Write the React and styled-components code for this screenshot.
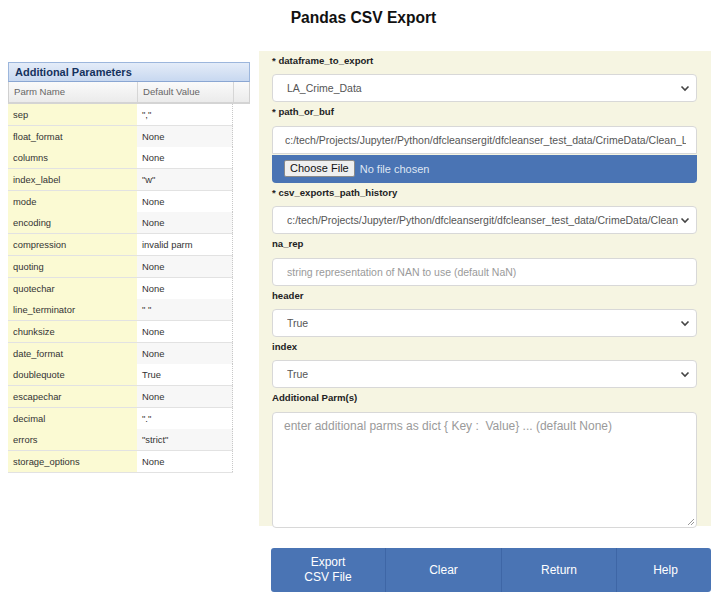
import React from "react";
import styled, { createGlobalStyle } from "styled-components";

const GlobalStyle = createGlobalStyle`
  body {
    margin: 0;
    background: #ffffff;
    font-family: "Liberation Sans", Arial, sans-serif;
  }
`;

const Page = styled.div`
  width: 720px;
  height: 597px;
  box-sizing: border-box;
  padding: 8px 0 0 8px;
`;

const Title = styled.h1`
  margin: 0 0 0 7px;
  font-size: 15.6px;
  font-weight: bold;
  color: #111;
  text-align: center;
  padding-right: 8px;
  height: 20px;
  line-height: 20px;
`;

const Body = styled.div`
  display: flex;
  align-items: flex-start;
  margin-top: 23px;
`;

const LeftCol = styled.div`
  width: 242px;
  margin-top: 11px;
`;

const TableTitle = styled.div`
  height: 20px;
  line-height: 19px;
  box-sizing: border-box;
  padding-left: 6px;
  font-size: 11px;
  font-weight: bold;
  color: #15325e;
  background: linear-gradient(#e4ecf8, #c8d8f0);
  border: 1px solid #9cb6dc;
  border-bottom: 1px solid #8aa6d2;
`;

const HeadRow = styled.div`
  display: grid;
  grid-template-columns: 129px 96px 1fr;
  height: 22px;
  box-sizing: border-box;
  background: linear-gradient(#fafafa, #ebebeb);
  border-bottom: 2px solid #d4d4d4;
  border-left: 1px solid #d0d0d0;
  border-right: 1px solid #d0d0d0;
`;

const HeadCell = styled.div`
  font-size: 9.6px;
  color: #666;
  line-height: 20px;
  padding-left: 5px;
  border-right: 1px solid #d6d6d6;
  &:last-child { border-right: none; }
`;

const Rows = styled.div`
  width: 225px;
`;

const Row = styled.div`
  display: grid;
  grid-template-columns: 129px 96px;
  height: 21.7px;
  box-sizing: border-box;
  border-bottom: 1px solid #e2e2e2;
`;

const NameCell = styled.div`
  background: #fbfad3;
  font-size: 9.4px;
  color: #333;
  line-height: 21px;
  padding-left: 5px;
`;

const ValueCell = styled.div`
  background: ${({ $alt }) => ($alt ? "#f7f7f7" : "#ffffff")};
  font-size: 9.4px;
  color: #333;
  line-height: 21px;
  padding-left: 5px;
  border-right: 1px dotted #c8c8c8;
`;

const RightCol = styled.div`
  margin-left: 9px;
  width: 452px;
  display: flex;
  flex-direction: column;
`;

const FormPanel = styled.div`
  background: #f6f5e2;
  padding: 0 14px 0 13px;
  height: 475px;
  box-sizing: border-box;
`;

const Label = styled.div`
  font-size: 9.6px;
  font-weight: bold;
  color: #222;
  height: 23.4px;
  line-height: 12px;
  padding-top: 4px;
  box-sizing: border-box;
`;

const Field = styled.div`
  position: relative;
  height: 28px;
  box-sizing: border-box;
  background: #fff;
  border: 1px solid #d8d8d8;
  border-radius: 4px;
  font-size: 10.5px;
  line-height: 26px;
  color: ${({ $placeholder }) => ($placeholder ? "#9a9a9a" : "#555")};
  padding-left: ${({ $pad }) => $pad || 14}px;
  padding-right: ${({ $pr }) => $pr || 12}px;
  border-bottom-left-radius: ${({ $joined }) => ($joined ? 0 : 4)}px;
  border-bottom-right-radius: ${({ $joined }) => ($joined ? 0 : 4)}px;
`;

const FieldText = styled.div`
  white-space: nowrap;
  overflow: hidden;
`;

const Chevron = styled.svg`
  position: absolute;
  right: 6px;
  top: 10px;
`;

const FileBar = styled.div`
  display: flex;
  align-items: center;
  gap: 5px;
  height: 28px;
  margin-top: 1px;
  box-sizing: border-box;
  background: #4a74b4;
  border-radius: 0 0 4px 4px;
  padding-left: 12px;
`;

const FileButton = styled.div`
  height: 17px;
  line-height: 15px;
  box-sizing: border-box;
  padding: 0 5px;
  background: #efefef;
  border: 1px solid #8a8a8a;
  border-radius: 2px;
  font-size: 11px;
  color: #111;
`;

const FileText = styled.span`
  font-size: 11px;
  color: #dfe6f3;
`;

const TextArea = styled.div`
  position: relative;
  height: 116px;
  box-sizing: border-box;
  background: #fff;
  border: 1px solid #d8d8d8;
  border-radius: 4px;
  font-size: 12px;
  color: #9a9a9a;
  padding: 6px 0 0 11px;
`;

const Grip = styled.svg`
  position: absolute;
  right: 1px;
  bottom: 1px;
`;

const ButtonBar = styled.div`
  display: flex;
  margin: 22px 0 0 12px;
  height: 44px;
  border-radius: 3px;
  overflow: hidden;
  width: 440px;
`;

const ActionButton = styled.div`
  flex: ${({ $w }) => `0 0 ${$w}px`};
  display: flex;
  align-items: center;
  justify-content: center;
  text-align: center;
  background: #4a74b4;
  color: #fff;
  font-size: 12px;
  line-height: 15px;
  border-left: 1px solid #3e66a6;
  &:first-child { border-left: none; }
`;

const params = [
  ["sep", "\",\""],
  ["float_format", "None"],
  ["columns", "None"],
  ["index_label", "\"w\""],
  ["mode", "None"],
  ["encoding", "None"],
  ["compression", "invalid parm"],
  ["quoting", "None"],
  ["quotechar", "None"],
  ["line_terminator", "\" \""],
  ["chunksize", "None"],
  ["date_format", "None"],
  ["doublequote", "True"],
  ["escapechar", "None"],
  ["decimal", "\".\""],
  ["errors", "\"strict\""],
  ["storage_options", "None"],
];

const Down = () => (
  <Chevron width="10" height="7" viewBox="0 0 10 7">
    <path d="M1.5 1.5 L5 5 L8.5 1.5" fill="none" stroke="#444" strokeWidth="1.6" />
  </Chevron>
);

const Select = ({ children }) => (
  <Field $pr={18}>
    <FieldText>{children}</FieldText>
    <Down />
  </Field>
);

const App = () => {
  const path =
    "c:/tech/Projects/Jupyter/Python/dfcleansergit/dfcleanser_test_data/CrimeData/Clean_LA_Crime_Data.csv";
  return (
    <Page>
      <GlobalStyle />
      <Title>Pandas CSV Export</Title>
      <Body>
        <LeftCol>
          <TableTitle>Additional Parameters</TableTitle>
          <HeadRow>
            <HeadCell>Parm Name</HeadCell>
            <HeadCell>Default Value</HeadCell>
            <HeadCell />
          </HeadRow>
          <Rows>
            {params.map(([name, value], i) => (
              <Row key={name}>
                <NameCell>{name}</NameCell>
                <ValueCell $alt={i % 2 === 1}>{value}</ValueCell>
              </Row>
            ))}
          </Rows>
        </LeftCol>
        <RightCol>
          <FormPanel>
            <Label>* dataframe_to_export</Label>
            <Select>LA_Crime_Data</Select>
            <Label>* path_or_buf</Label>
            <Field $joined $pad={12} $pr={10}>
              <FieldText>{path}</FieldText>
            </Field>
            <FileBar>
              <FileButton>Choose File</FileButton>
              <FileText>No file chosen</FileText>
            </FileBar>
            <Label>* csv_exports_path_history</Label>
            <Select>{path}</Select>
            <Label>na_rep</Label>
            <Field $placeholder>
              <FieldText>string representation of NAN to use (default NaN)</FieldText>
            </Field>
            <Label>header</Label>
            <Select>True</Select>
            <Label>index</Label>
            <Select>True</Select>
            <Label>Additional Parm(s)</Label>
            <TextArea>
              enter additional parms as dict {"{"} Key :&nbsp; Value{"}"} ... (default None)
              <Grip width="9" height="9" viewBox="0 0 9 9">
                <path d="M8 2 L2 8 M8 5 L5 8" stroke="#999" strokeWidth="1" />
              </Grip>
            </TextArea>
          </FormPanel>
          <ButtonBar>
            <ActionButton $w={114}>Export<br />CSV File</ActionButton>
            <ActionButton $w={115}>Clear</ActionButton>
            <ActionButton $w={114}>Return</ActionButton>
            <ActionButton $w={97}>Help</ActionButton>
          </ButtonBar>
        </RightCol>
      </Body>
    </Page>
  );
};

export default App;
